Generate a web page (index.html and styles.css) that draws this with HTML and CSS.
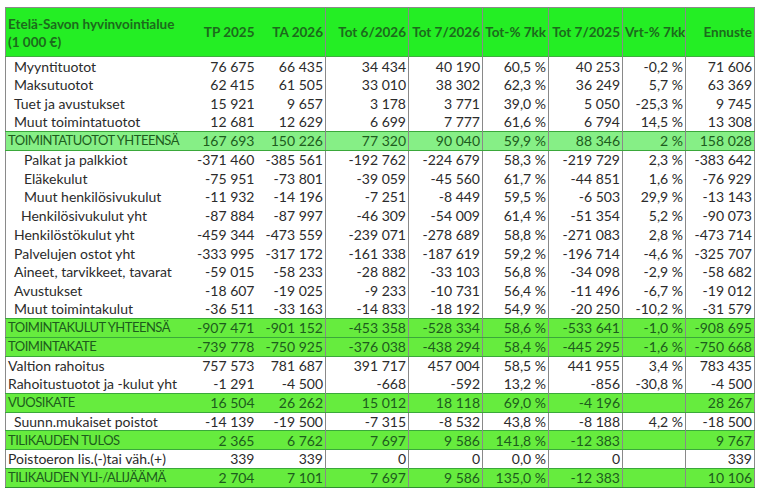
FILE: index.html
```html
<!DOCTYPE html>
<html lang="fi">
<head>
<meta charset="utf-8">
<title>Etelä-Savon hyvinvointialue</title>
<link rel="stylesheet" href="styles.css">
</head>
<body>
<table class="report">
  <colgroup>
    <col class="c-label"><col class="c-tp"><col class="c-ta"><col class="c-t6"><col class="c-t7"><col class="c-pct"><col class="c-t725"><col class="c-vrt"><col class="c-enn">
  </colgroup>
  <thead>
    <tr class="head">
      <th class="lab">Etelä-Savon hyvinvointialue<br>(1 000 €)</th>
      <th>TP 2025</th><th class="sep">TA 2026</th><th class="sep">Tot 6/2026</th><th class="sep">Tot 7/2026</th><th class="sep">Tot-% 7kk</th><th class="sep">Tot 7/2025</th><th class="sep">Vrt-% 7kk</th><th>Ennuste</th>
    </tr>
  </thead>
  <tbody>
    <tr><td class="lab i1">Myyntituotot</td><td>76 675</td><td class="sep">66 435</td><td class="sep">34 434</td><td class="sep">40 190</td><td class="sep">60,5 %</td><td class="sep">40 253</td><td class="sep">-0,2 %</td><td>71 606</td></tr>
    <tr><td class="lab i1">Maksutuotot</td><td>62 415</td><td class="sep">61 505</td><td class="sep">33 010</td><td class="sep">38 302</td><td class="sep">62,3 %</td><td class="sep">36 249</td><td class="sep">5,7 %</td><td>63 369</td></tr>
    <tr><td class="lab i1">Tuet ja avustukset</td><td>15 921</td><td class="sep">9 657</td><td class="sep">3 178</td><td class="sep">3 771</td><td class="sep">39,0 %</td><td class="sep">5 050</td><td class="sep">-25,3 %</td><td>9 745</td></tr>
    <tr><td class="lab i1">Muut toimintatuotot</td><td>12 681</td><td class="sep">12 629</td><td class="sep">6 699</td><td class="sep">7 777</td><td class="sep">61,6 %</td><td class="sep">6 794</td><td class="sep">14,5 %</td><td>13 308</td></tr>
    <tr class="sum pale"><td class="lab">TOIMINTATUOTOT YHTEENSÄ</td><td>167 693</td><td class="sep">150 226</td><td class="sep">77 320</td><td class="sep">90 040</td><td class="sep">59,9 %</td><td class="sep">88 346</td><td class="sep">2 %</td><td>158 028</td></tr>
    <tr><td class="lab i3">Palkat ja palkkiot</td><td>-371 460</td><td class="sep">-385 561</td><td class="sep">-192 762</td><td class="sep">-224 679</td><td class="sep">58,3 %</td><td class="sep">-219 729</td><td class="sep">2,3 %</td><td>-383 642</td></tr>
    <tr><td class="lab i3">Eläkekulut</td><td>-75 951</td><td class="sep">-73 801</td><td class="sep">-39 059</td><td class="sep">-45 560</td><td class="sep">61,7 %</td><td class="sep">-44 851</td><td class="sep">1,6 %</td><td>-76 929</td></tr>
    <tr><td class="lab i3">Muut henkilösivukulut</td><td>-11 932</td><td class="sep">-14 196</td><td class="sep">-7 251</td><td class="sep">-8 449</td><td class="sep">59,5 %</td><td class="sep">-6 503</td><td class="sep">29,9 %</td><td>-13 143</td></tr>
    <tr><td class="lab i2">Henkilösivukulut yht</td><td>-87 884</td><td class="sep">-87 997</td><td class="sep">-46 309</td><td class="sep">-54 009</td><td class="sep">61,4 %</td><td class="sep">-51 354</td><td class="sep">5,2 %</td><td>-90 073</td></tr>
    <tr><td class="lab i1">Henkilöstökulut yht</td><td>-459 344</td><td class="sep">-473 559</td><td class="sep">-239 071</td><td class="sep">-278 689</td><td class="sep">58,8 %</td><td class="sep">-271 083</td><td class="sep">2,8 %</td><td>-473 714</td></tr>
    <tr><td class="lab i1">Palvelujen ostot yht</td><td>-333 995</td><td class="sep">-317 172</td><td class="sep">-161 338</td><td class="sep">-187 619</td><td class="sep">59,2 %</td><td class="sep">-196 714</td><td class="sep">-4,6 %</td><td>-325 707</td></tr>
    <tr><td class="lab i1">Aineet, tarvikkeet, tavarat</td><td>-59 015</td><td class="sep">-58 233</td><td class="sep">-28 882</td><td class="sep">-33 103</td><td class="sep">56,8 %</td><td class="sep">-34 098</td><td class="sep">-2,9 %</td><td>-58 682</td></tr>
    <tr><td class="lab i1">Avustukset</td><td>-18 607</td><td class="sep">-19 025</td><td class="sep">-9 233</td><td class="sep">-10 731</td><td class="sep">56,4 %</td><td class="sep">-11 496</td><td class="sep">-6,7 %</td><td>-19 012</td></tr>
    <tr><td class="lab i1">Muut toimintakulut</td><td>-36 511</td><td class="sep">-33 163</td><td class="sep">-14 833</td><td class="sep">-18 192</td><td class="sep">54,9 %</td><td class="sep">-20 250</td><td class="sep">-10,2 %</td><td>-31 579</td></tr>
    <tr class="sum"><td class="lab">TOIMINTAKULUT YHTEENSÄ</td><td>-907 471</td><td class="sep">-901 152</td><td class="sep">-453 358</td><td class="sep">-528 334</td><td class="sep">58,6 %</td><td class="sep">-533 641</td><td class="sep">-1,0 %</td><td>-908 695</td></tr>
    <tr class="sum"><td class="lab">TOIMINTAKATE</td><td>-739 778</td><td class="sep">-750 925</td><td class="sep">-376 038</td><td class="sep">-438 294</td><td class="sep">58,4 %</td><td class="sep">-445 295</td><td class="sep">-1,6 %</td><td>-750 668</td></tr>
    <tr><td class="lab">Valtion rahoitus</td><td>757 573</td><td class="sep">781 687</td><td class="sep">391 717</td><td class="sep">457 004</td><td class="sep">58,5 %</td><td class="sep">441 955</td><td class="sep">3,4 %</td><td>783 435</td></tr>
    <tr><td class="lab">Rahoitustuotot ja -kulut yht</td><td>-1 291</td><td class="sep">-4 500</td><td class="sep">-668</td><td class="sep">-592</td><td class="sep">13,2 %</td><td class="sep">-856</td><td class="sep">-30,8 %</td><td>-4 500</td></tr>
    <tr class="sum"><td class="lab">VUOSIKATE</td><td>16 504</td><td class="sep">26 262</td><td class="sep">15 012</td><td class="sep">18 118</td><td class="sep">69,0 %</td><td class="sep">-4 196</td><td class="sep"></td><td>28 267</td></tr>
    <tr><td class="lab i1">Suunn.mukaiset poistot</td><td>-14 139</td><td class="sep">-19 500</td><td class="sep">-7 315</td><td class="sep">-8 532</td><td class="sep">43,8 %</td><td class="sep">-8 188</td><td class="sep">4,2 %</td><td>-18 500</td></tr>
    <tr class="sum"><td class="lab">TILIKAUDEN TULOS</td><td>2 365</td><td class="sep">6 762</td><td class="sep">7 697</td><td class="sep">9 586</td><td class="sep">141,8 %</td><td class="sep">-12 383</td><td class="sep"></td><td>9 767</td></tr>
    <tr><td class="lab">Poistoeron lis.(-)tai väh.(+)</td><td>339</td><td class="sep">339</td><td class="sep">0</td><td class="sep">0</td><td class="sep">0,0 %</td><td class="sep">0</td><td class="sep"></td><td>339</td></tr>
    <tr class="sum last"><td class="lab">TILIKAUDEN YLI-/ALIJÄÄMÄ</td><td>2 704</td><td class="sep">7 101</td><td class="sep">7 697</td><td class="sep">9 586</td><td class="sep">135,0 %</td><td class="sep">-12 383</td><td class="sep"></td><td>10 106</td></tr>
  </tbody>
</table>
</body>
</html>
```
FILE: styles.css
```css
html, body {
  margin: 0;
  padding: 0;
  background: #ffffff;
}
body {
  padding: 7px 0 0 5px;
  font-family: "Lato", "Noto Sans", sans-serif;
  font-size: 14px;
  color: #2b2b2b;
}
.report {
  border-collapse: collapse;
  table-layout: fixed;
  width: 749px;
  border: 1px solid #8a8a8a;
}
.c-label { width: 180px; }
.c-tp { width: 71px; }
.c-ta { width: 69px; }
.c-t6 { width: 83px; }
.c-t7 { width: 74px; }
.c-pct { width: 66px; }
.c-t725 { width: 74px; }
.c-vrt { width: 63px; }
.c-enn { width: 69px; }

.report th, .report td {
  padding: 0 2px;
  text-align: right;
  white-space: nowrap;
  overflow: hidden;
  line-height: 15px;
}
.report tbody tr { height: 18.73px; }
.report td { height: 18.73px; box-sizing: border-box; }
.report .lab { text-align: left; padding-left: 2px; }
.report .i1 { padding-left: 8px; }
.report .i2 { padding-left: 15px; }
.report .i3 { padding-left: 18px; }
.report .sep { border-right: 1px solid rgba(40, 40, 40, 0.55); }

.head {
  background: #24ee24;
  color: #1c6a1c;
  height: 49px;
  border-bottom: 1px solid #3fae3f;
}
.head th {
  font-weight: 700;
  font-size: 13.5px;
  vertical-align: middle;
}
.head th.lab {
  line-height: 18px;
  vertical-align: top;
  padding-top: 7px;
}
.sum {
  background: #66ec3e;
  color: #1d5c1d;
}
.sum td {
  border-top: 1px solid #3aa83a;
  border-bottom: 1px solid #3aa83a;
}
.sum td.lab {
  font-size: 13px;
  letter-spacing: -0.5px;
}
.sum.pale { background: #86ef86; }
.sum.last td { border-bottom: 1px solid #2f8f2f; }
```
